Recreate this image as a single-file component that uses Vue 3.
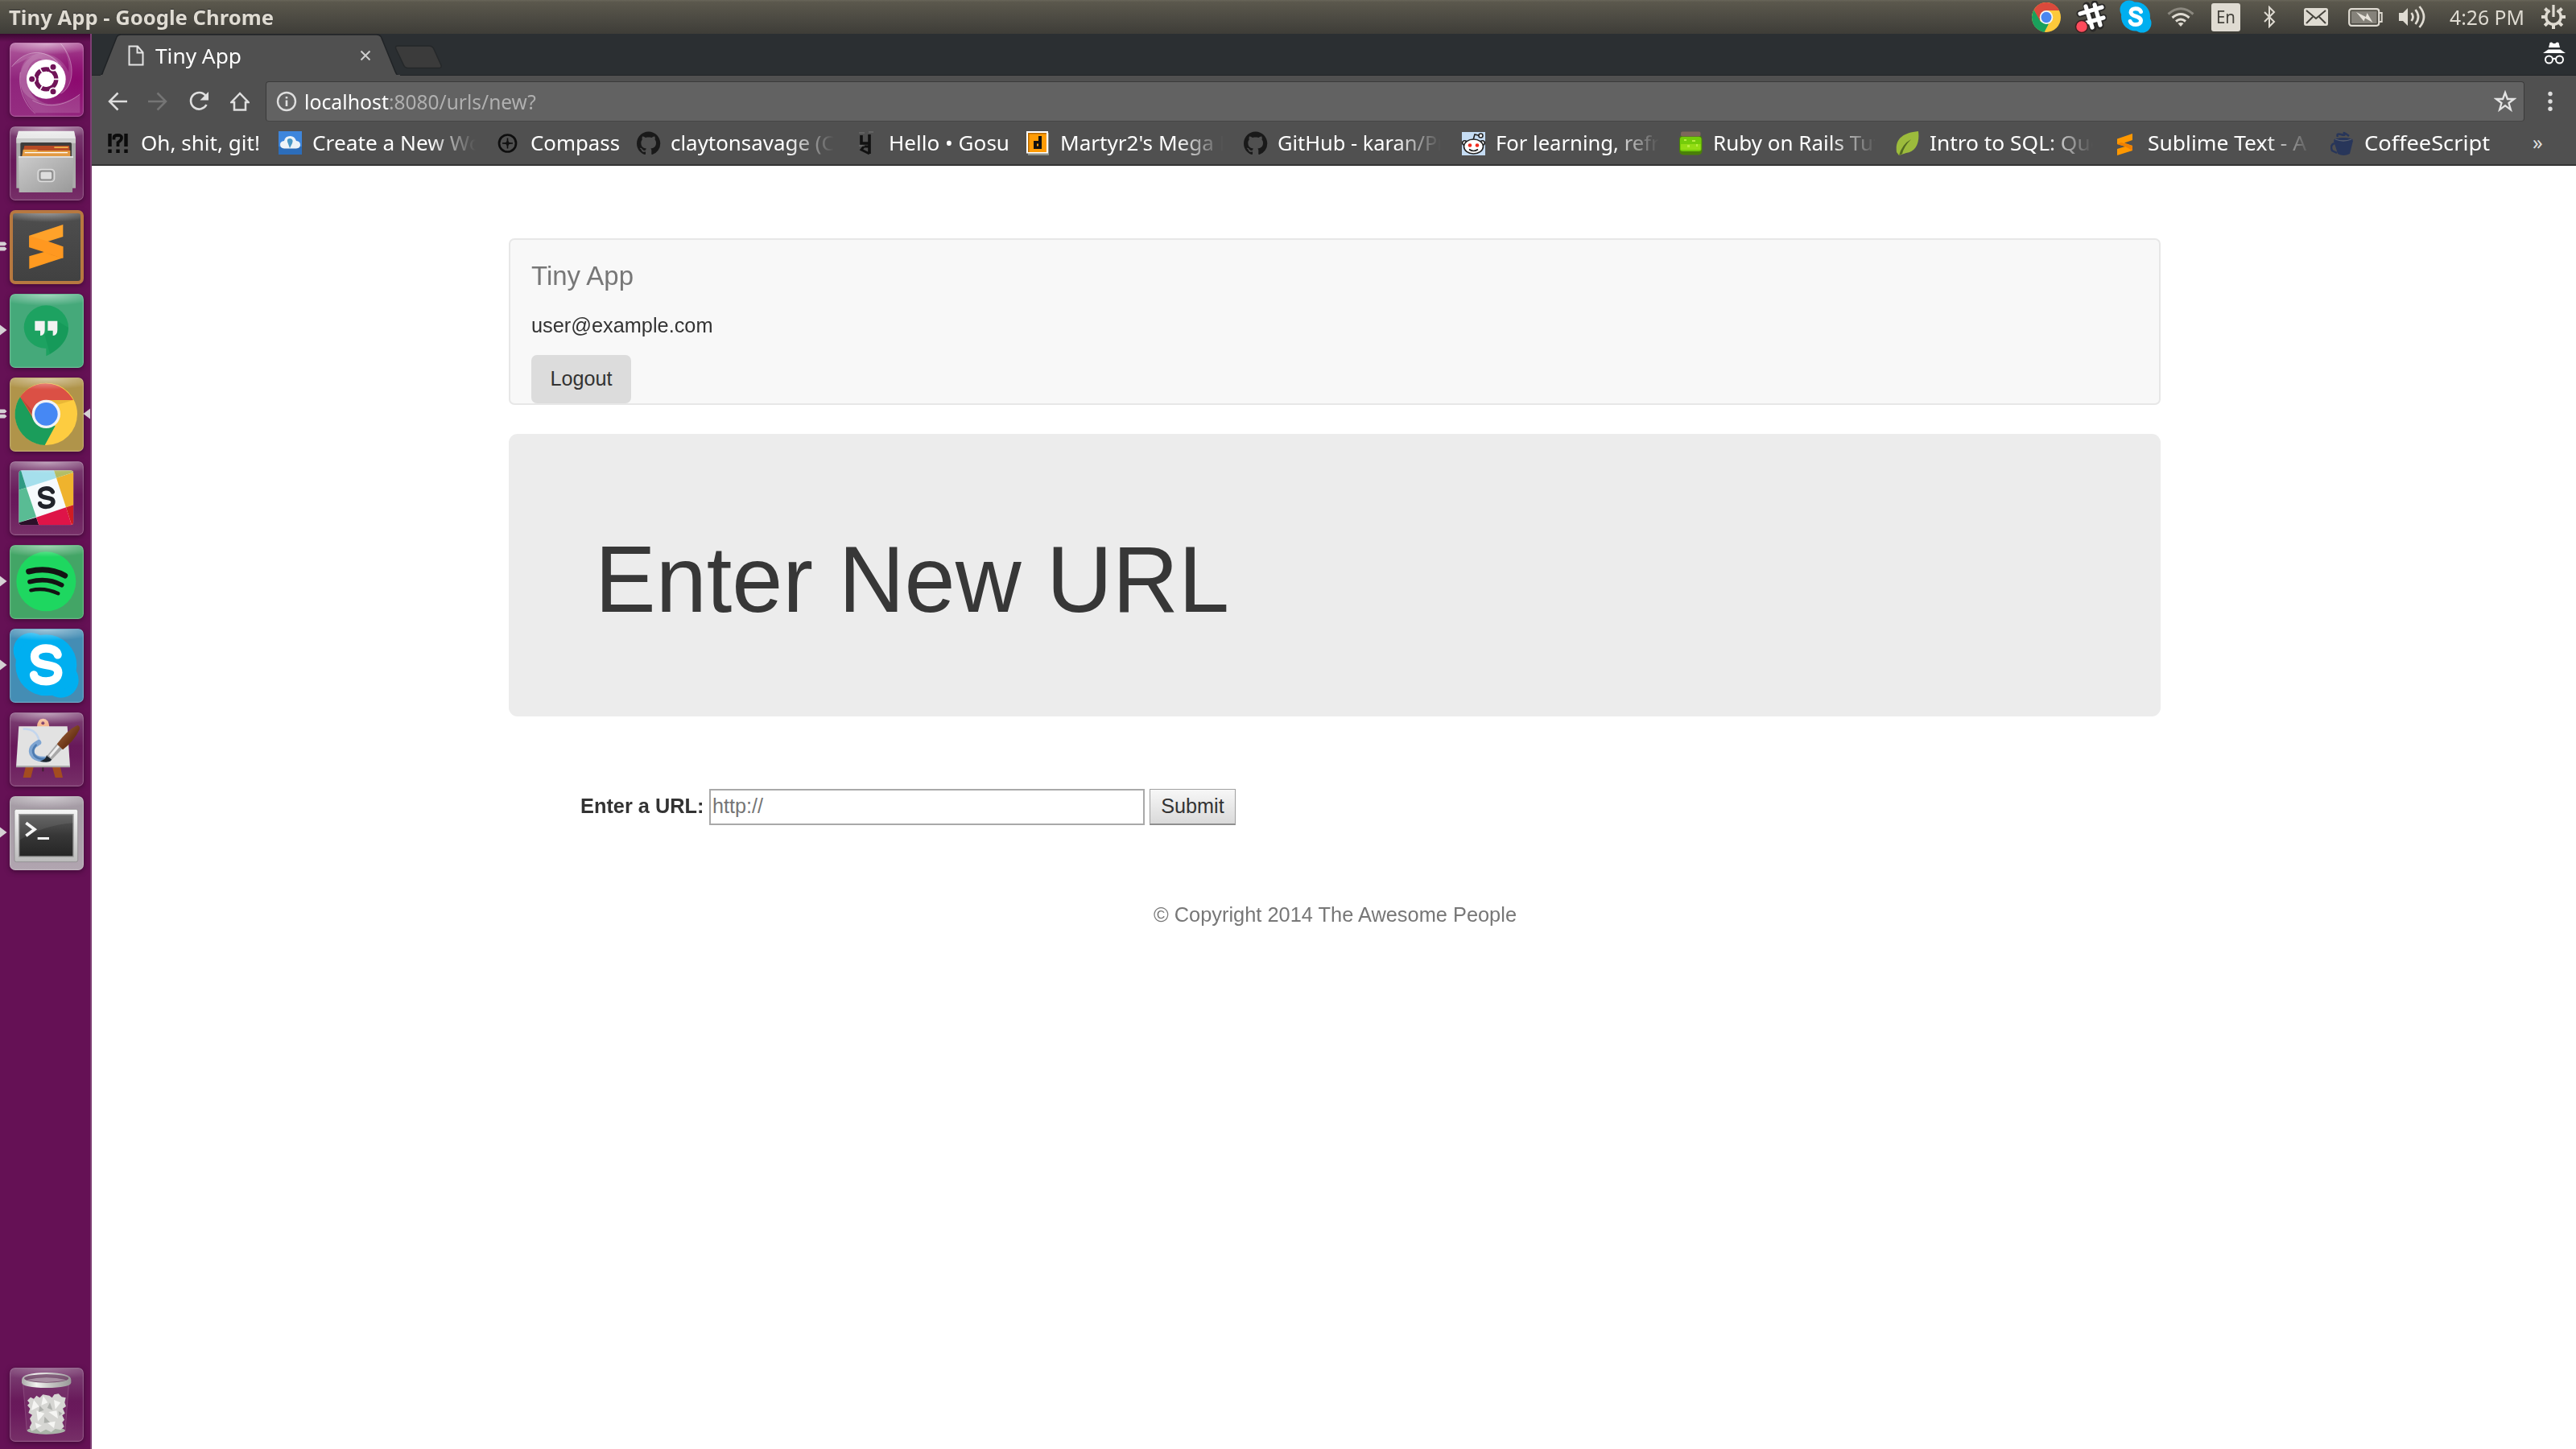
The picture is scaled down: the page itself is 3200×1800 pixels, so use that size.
<script setup>
import { nextTick } from 'vue'

// Condenses a label so that its first n characters (or all of it) span w pixels.
const vFit = {
  mounted(el, { value }) {
    nextTick(() => {
      const node = el.firstChild
      const range = document.createRange()
      range.setStart(node, 0)
      range.setEnd(node, value.n || node.length)
      const k = value.w / range.getBoundingClientRect().width
      const full = el.getBoundingClientRect().width
      el.style.transform = `scaleX(${k})`
      el.style.marginRight = `${full * (k - 1)}px`
    })
  },
}

const bookmarks = [
  { icon: 'bang', text: 'Oh, shit, git!', fit: { w: 148 }, box: 144 },
  { icon: 'cloud', text: 'Create a New Wor', fit: { w: 164, n: 12 }, box: 203, cut: true },
  { icon: 'compass', text: 'Compass', fit: { w: 111 }, box: 106 },
  { icon: 'github', text: 'claytonsavage (Cl', fit: { w: 173, n: 13 }, box: 203, cut: true },
  { icon: 'gosu', text: 'Hello • Gosu', fit: { w: 150 }, box: 145 },
  { icon: 'dic', text: "Martyr2's Mega Pr", fit: { w: 191, n: 14 }, box: 202, cut: true },
  { icon: 'github', text: 'GitHub - karan/Pr', fit: { w: 183, n: 15 }, box: 203, cut: true },
  { icon: 'reddit', text: 'For learning, refre', fit: { w: 153, n: 13 }, box: 202, cut: true },
  { icon: 'jar', text: 'Ruby on Rails Tuto', fit: { w: 163, n: 13 }, box: 201, cut: true },
  { icon: 'leaf', text: 'Intro to SQL: Quer', fit: { w: 156, n: 13 }, box: 203, cut: true },
  { icon: 'sublime', text: 'Sublime Text - A', fit: { w: 158, n: 12 }, box: 201, cut: true },
  { icon: 'coffee', text: 'CoffeeScript', fit: { w: 156 }, box: 153 },
]

const apps = [
  { name: 'dash' },
  { name: 'files' },
  { name: 'sublime', pips: 2 },
  { name: 'hangouts', pips: 1 },
  { name: 'chrome', pips: 2, active: true },
  { name: 'slack' },
  { name: 'spotify', pips: 1 },
  { name: 'skype', pips: 1 },
  { name: 'paint' },
  { name: 'terminal', pips: 1 },
]
</script>

<template>
  <div class="desktop">
    <header class="panel">
      <span v-fit="{ w: 329 }" class="fit title">Tiny App - Google Chrome</span>
      <div class="tray">
        <span class="slot s56">
          <svg width="36" height="37" viewBox="-50 -50 100 100" preserveAspectRatio="none">
            <circle r="50" fill="#fdc93a" />
            <path d="M0-50A50 50 0 0 1 45-23H0L-24 12-43-25A50 50 0 0 1 0-50Z" fill="#db4a3c" />
            <path d="M-43-25-20 14 8 22-7 50A50 50 0 0 1-43-25Z" fill="#1aa05c" />
            <circle r="23" fill="#f5f5f5" /><circle r="18" fill="#4a86f0" />
          </svg>
        </span>
        <span class="slot s55">
          <svg width="40" height="40" viewBox="0 0 40 40">
            <g stroke-linecap="round" fill="none">
              <path d="M15 6l8 28M25 4l7 27M7 16l27-8M9 29l27-8" stroke="#2a2928" stroke-width="9" />
              <path d="M14 7l8 26M25 5l7 25M7 16l27-8M9 29l27-8" stroke="#fff" stroke-width="5.2" />
            </g>
            <circle cx="9" cy="32" r="7.5" fill="#ff4b5c" stroke="#3b2020" stroke-width="1.5" />
          </svg>
        </span>
        <span class="slot s56">
          <svg width="40" height="42" viewBox="0 0 40 42">
            <circle cx="12" cy="12" r="11.5" fill="#00aff0" /><circle cx="28" cy="29" r="11.5" fill="#00aff0" />
            <circle cx="20" cy="20.500" r="18" fill="#00aff0" />
            <path d="M26.500 14.500C25 9.500 14 9 14 15.200c0 6 12.500 4 12.500 10.600C26.500 32 15 32 13.200 26.500" fill="none" stroke="#fff" stroke-width="5" stroke-linecap="round" />
          </svg>
        </span>
        <span class="slot s56">
          <svg width="34" height="24" viewBox="0 0 34 24" fill="none" stroke="#dfdbd2" stroke-width="3">
            <path d="M1.500 8.500Q17-5 32.500 8.500" stroke="#8b887f" />
            <path d="M6.500 13Q17 4 27.500 13M11 17.500q6-5 12 0" /><path d="M13.500 20l3.500 4 3.500-4q-3.500-2-7 0Z" fill="#dfdbd2" stroke="none" />
          </svg>
        </span>
        <span class="slot s57"><span class="lang"><span v-fit="{ w: 24 }" class="fit">En</span></span></span>
        <span class="slot s51">
          <svg width="16" height="28" viewBox="0 0 16 28" fill="none" stroke="#dfdbd2" stroke-width="2"><path d="M2 8l12 12-6 6V2l6 6L2 20" /></svg>
        </span>
        <span class="slot s65">
          <svg width="30" height="22" viewBox="0 0 30 22">
            <rect width="30" height="22" rx="2.500" fill="#dfdbd2" />
            <path d="M3 3l12 10L27 3M3 19l8-8M27 19l-8-8" fill="none" stroke="#45433c" stroke-width="2" />
          </svg>
        </span>
        <span class="slot s58">
          <svg width="43" height="23" viewBox="0 0 43 23">
            <rect x="1.200" y="1.200" width="37" height="20.600" rx="3" fill="none" stroke="#dfdbd2" stroke-width="2.200" />
            <rect x="4" y="4" width="31.500" height="15" fill="#85827a" /><path d="M39 6h2.800v11H39" fill="none" stroke="#dfdbd2" stroke-width="1.800" />
            <path d="M10 5l12 6 1.500-5 7 12-9.500-5.500-1.500 4Z" fill="#e6e2da" />
          </svg>
        </span>
        <span class="slot s59">
          <svg width="36" height="32" viewBox="0 0 36 32">
            <path d="M1 11h5l6-6v22l-6-6H1Z" fill="#dfdbd2" />
            <path d="M16.500 11q4 5 0 10M21.500 7q7 9 0 18M26.500 3q11 13 0 26" fill="none" stroke="#dfdbd2" stroke-width="2.700" />
          </svg>
        </span>
        <span v-fit="{ w: 93 }" class="fit clock">4:26 PM</span>
        <svg width="30" height="30" viewBox="-15 -15 30 30" fill="none" stroke="#dfdbd2">
          <path d="M-4.500-8A9.200 9.200 0 1 0 4.500-8" stroke-width="3.400" />
          <path d="M0-15V0" stroke-width="3.200" />
          <path d="M0 10v5M10 0h5M-10 0h-5M7 7l3.800 3.800M-7 7l-3.800 3.800M7.500-7.500l3-3M-7.500-7.500l-3-3" stroke-width="4" />
        </svg>
      </div>
    </header>

    <div class="body">
      <aside class="launcher">
        <svg width="0" height="0" class="defs">
          <defs>
            <radialGradient id="shine" cx=".5" cy="0" r=".75" gradientTransform="matrix(1 0 0 .55 0 0)"><stop offset="0" stop-color="#fff" stop-opacity=".5" /><stop offset="1" stop-color="#fff" stop-opacity="0" /></radialGradient>
            <linearGradient id="steel" x1="0" y1="0" x2="1" y2="1"><stop offset="0" stop-color="#ccc" /><stop offset="1" stop-color="#999" /></linearGradient>
            <linearGradient id="white" x1="0" y1="0" x2="0" y2="1"><stop offset="0" stop-color="#f5f5f5" /><stop offset="1" stop-color="#bbb" /></linearGradient>
            <linearGradient id="screen" x1="0" y1="0" x2="0" y2="1"><stop offset="0" stop-color="#5a5a5a" /><stop offset=".5" stop-color="#373737" /><stop offset="1" stop-color="#252525" /></linearGradient>
            <linearGradient id="wood" x1="0" y1="0" x2="1" y2="1"><stop offset="0" stop-color="#a86c40" /><stop offset=".6" stop-color="#6d3517" /><stop offset="1" stop-color="#5a2a12" /></linearGradient>
            <linearGradient id="rim" x1="0" y1="0" x2="1" y2="0"><stop offset="0" stop-color="#aaa" /><stop offset=".3" stop-color="#f2f2f0" /><stop offset=".6" stop-color="#c4c4c2" /><stop offset="1" stop-color="#999" /></linearGradient>
          </defs>
        </svg>
        <div v-for="app in apps" :key="app.name" class="app">
          <svg v-if="app.pips" class="pip" width="9" height="14" viewBox="0 0 9 14" fill="#d5d0d4">
            <path v-if="app.pips === 1" d="M0 0.500L8.500 7 0 13.500Z" />
            <path v-else d="M0 1.500h6L8.500 4 6 6.300H0ZM0 7.700h6L8.500 10 6 12.500H0Z" />
          </svg>
          <svg v-if="app.active" class="focus" width="9" height="14" viewBox="0 0 9 14"><path d="M9 0.500L.5 7 9 13.500Z" fill="#d5d0d4" /></svg>
          <div class="tile" :class="app.name">
            <svg viewBox="0 0 276 276" width="92" height="92">
              <g v-if="app.name === 'dash'">
                <g fill="#fff" fill-opacity=".14" stroke="#fff" stroke-opacity=".4" stroke-width="2.500">
                  <path d="M8 88C60 20 150 20 200 90L135 66Q70 70 66 136 66 190 110 220 40 200 38 140 38 80 85 50Z" stroke="none" />
                  <path d="M8 90C55 25 130 20 180 75M190 3C250 70 240 165 190 190M40 110C30 170 55 230 95 264M85 215C150 250 215 230 262 192M8 90" fill="none" />
                  <path d="M190 3C250 70 240 165 190 190Q230 130 170 75L110 60Q60 70 66 140 70 200 130 225 190 240 262 192L262 262H95Q30 190 40 110 50 50 110 40 190 40 220 110 225 50 190 3Z" stroke="none" />
                </g>
                <circle cx="136" cy="136" r="73" fill="#fff" />
                <circle cx="136" cy="136" r="37" fill="none" stroke="#701458" stroke-width="17" />
                <path d="M136 136h50M136 136l-26-45M136 136l-26 45" stroke="#fff" stroke-width="5" />
                <circle cx="136" cy="136" r="29" fill="#fff" />
                <g fill="#701458" stroke="#fff" stroke-width="5"><circle cx="83" cy="136" r="13" /><circle cx="162" cy="91" r="13" /><circle cx="162" cy="182" r="13" /></g>
              </g>
              <g v-if="app.name === 'files'">
                <path d="M33 18H240L246 46V230H25V46Z" fill="#aaa" /><path d="M33 17H240L246 46H25Z" fill="#e8e8e8" /><path d="M25 46H246V62H25Z" fill="#cdcdcd" />
                <rect x="40" y="60" width="191" height="60" rx="5" fill="#3f3c3b" />
                <path d="M55 72H222L226 112H46Z" fill="#b64a25" /><path d="M50 86H104V90H226V112H46Z" fill="#e39a43" /><path d="M166 76H218V81H166ZM52 90H100V94H52Z" fill="#eeb34c" /><path d="M56 96H216V100H56Z" fill="#fff" />
                <path d="M33 111H237L234 246H35Z" fill="url(#steel)" /><path d="M33 111H237V117H33Z" fill="#ddd" />
                <rect x="105" y="160" width="62" height="46" rx="12" fill="#bbb" stroke="#ddd" stroke-width="4" /><rect x="113" y="167" width="46" height="32" rx="7" fill="#ddd" stroke="#8a8a8a" stroke-width="5" />
              </g>
              <g v-if="app.name === 'sublime'">
                <path d="M73 172L199 136V178L73 219Z" fill="#ff9a20" /><path d="M125 155L199 179L160 168Z" fill="#e5831a" /><path d="M73 95L199 54V99L73 139Z" fill="#ffa22a" /><path d="M145 117L73 95V139L125 155 199 179V136Z" fill="#ff9820" />
              </g>
              <g v-if="app.name === 'hangouts'">
                <path d="M136 43A83 83 0 0 1 219 126C219 175 180 210 136 232V203A80 80 0 0 1 53 126 83 83 0 0 1 136 43Z" fill="#1da261" />
                <path d="M131 154L178 101 219 126Q215 190 150 224Z" fill="#0d8e51" opacity=".4" />
                <path d="M94 101h37v33q0 20-17 22v-19H94ZM142 101h36v33q0 20-17 22v-19h-19Z" fill="#f2f2f2" />
              </g>
              <g v-if="app.name === 'chrome'">
                <circle cx="136" cy="136" r="116" fill="#fdcc40" />
                <path d="M237 84H136L86 145 39 72A116 116 0 0 1 237 84Z" fill="#db5045" /><path d="M39 72L92 160 170 180 131 252A116 116 0 0 1 39 72Z" fill="#1b9d5b" />
                <path d="M136 84H237L184 100Z" fill="#dba52e" opacity=".55" /><path d="M39 72L86 155V125Z" fill="#962f28" opacity=".4" />
                <circle cx="136" cy="136" r="53" fill="#f3f3f5" /><circle cx="136" cy="136" r="43" fill="#4688f4" />
              </g>
              <g v-if="app.name === 'slack'">
                <clipPath id="sq"><rect x="34" y="34" width="204" height="204" rx="12" /></clipPath>
                <g clip-path="url(#sq)">
                  <path d="M34 34H238V238H34Z" fill="#f6fafc" /><path d="M34 34H165L174 62 62 98 42 34Z" fill="#a5dfec" /><path d="M34 34H42L62 98 34 107Z" fill="#2f9a83" />
                  <path d="M34 107L62 98 99 207 34 229Z" fill="#59bc94" /><path d="M34 229L99 209 109 238H34Z" fill="#2b1029" /><path d="M99 209L210 172 231 238H109Z" fill="#de1448" />
                  <path d="M174 62L238 41V163L210 172Z" fill="#efb32d" /><path d="M165 34H238V41L174 62Z" fill="#b3bd67" /><path d="M210 172L238 163V238H231Z" fill="#cf1c22" />
                </g>
                <path d="M160 114C150 94 112 99 113 119 115 144 162 128 162 151 161 175 115 174 113 157" fill="none" stroke="#20232a" stroke-width="16" stroke-linecap="round" />
              </g>
              <g v-if="app.name === 'spotify'">
                <circle cx="136" cy="136" r="111" fill="#1ed760" /><g fill="none" stroke="#131313" stroke-linecap="round"><path d="M71 99Q145 80 206 114" stroke-width="21" /><path d="M75 137Q140 120 194 149" stroke-width="17" /><path d="M79 169Q130 157 181 181" stroke-width="13" /></g>
              </g>
              <g v-if="app.name === 'skype'">
                <g fill="#00aff0"><circle cx="80" cy="81" r="66" /><circle cx="191" cy="191" r="66" /><circle cx="136" cy="136" r="114" /></g>
                <path d="M179 97C172 64 92 65 93 104 94 151 180 120 181 164 180 208 94 203 90 172" fill="none" stroke="#fff" stroke-width="31" stroke-linecap="round" />
              </g>
              <g v-if="app.name === 'paint'">
                <path d="M60 200H90L79 243H50ZM158 200H188L198 243H170Z" fill="#a34c20" /><path d="M121 200h6v20h-6Z" fill="#402030" />
                <path d="M102 55Q103 22 125 23 146 24 148 55Z" fill="#f6b78f" /><circle cx="124" cy="40" r="6" fill="#7e3d69" />
                <path d="M34 52H215L225 203H24Z" fill="#e2e2e2" /><path d="M24 199H225V205H24Z" fill="#a5a5a5" />
                <path d="M50 62Q92 58 107 95 114 112 100 128" fill="none" stroke="#c3d6ee" stroke-width="8" /><path d="M108 112Q74 130 84 155 95 178 140 174" fill="none" stroke="#7ea5d2" stroke-width="20" stroke-linecap="round" /><path d="M98 122Q80 140 92 160 105 176 140 174" fill="none" stroke="#4d7bb0" stroke-width="8" stroke-linecap="round" />
                <path d="M112 182Q134 178 138 160L158 168Q160 192 112 182Z" fill="#1c252d" /><path d="M139 162L175 118 196 136 157 176Z" fill="#a8a8a8" /><path d="M147 160L179 122 186 128 152 168Z" fill="#eee" />
                <path d="M176 118Q215 65 252 48 264 50 260 64 240 107 198 139Z" fill="url(#wood)" />
              </g>
              <g v-if="app.name === 'terminal'">
                <rect x="18" y="49" width="236" height="196" rx="7" fill="url(#white)" stroke="#858385" stroke-width="2" /><rect x="35" y="68" width="202" height="157" fill="url(#screen)" stroke="#989898" stroke-width="4" />
                <path d="M35 68H237V100Q120 110 35 165Z" fill="#fff" opacity=".08" /><path d="M61 100L93 124 61 148" fill="none" stroke="#f5f5f5" stroke-width="11" /><rect x="104" y="153" width="43" height="9" fill="#f5f5f5" />
              </g>
              <path d="M8 3H268Q273 3 273 10V85Q136 125 3 85V10Q3 3 8 3Z" fill="url(#shine)" />
              <rect x="2" y="2" width="272" height="272" rx="16" fill="none" stroke="#fff" stroke-opacity=".22" stroke-width="3.500" />
            </svg>
          </div>
        </div>
        <div class="app bin">
          <div class="tile">
            <svg viewBox="0 0 276 276" width="92" height="92">
              <path d="M49 50H221L207 235Q136 260 64 235Z" fill="#7d3a70" opacity=".5" stroke="#b98aae" stroke-width="2" /><ellipse cx="136" cy="234" rx="71" ry="14" fill="#aab3a8" />
              <path d="M66 122L78 110 90 116 100 104 112 112 124 100 140 103 148 104 158 112 166 100 182 97 194 109 209 112 205 130 210 144 198 152 206 170 196 178 204 194 196 204 203 220 190 232 170 228 155 240 135 230 115 241 100 228 82 236 74 222 82 206 75 190 84 176 70 168 76 152 66 140 74 132Z" fill="#d6d6d3" />
              <path d="M90 120L110 145 80 160ZM125 105L142 130 118 140ZM165 120L190 130 170 155ZM100 160L130 170 105 200ZM145 165L175 160 180 190ZM95 205L120 215 100 226ZM140 205L170 200 165 225Z" fill="#f5f5f3" /><path d="M112 142L128 158 108 165ZM150 130L160 158 140 150ZM130 182L150 204 128 206ZM182 162L196 170 185 180Z" fill="#aeb0ac" />
              <path d="M45 45Q45 19 137 18 229 19 229 45V56Q225 74 137 75 50 74 45 56Z" fill="url(#rim)" /><ellipse cx="137" cy="40" rx="83" ry="16" fill="#77506f" /><path d="M62 46Q137 28 212 46 137 62 62 46Z" fill="#a78fa2" />
              <path d="M8 3H268Q273 3 273 10V85Q136 125 3 85V10Q3 3 8 3Z" fill="url(#shine)" opacity=".5" />
              <rect x="2" y="2" width="272" height="272" rx="16" fill="none" stroke="#fff" stroke-opacity=".2" stroke-width="3.500" />
            </svg>
          </div>
        </div>
      </aside>

      <section class="browser">
        <div class="tabstrip">
          <div class="tab">
            <svg class="tabshape" width="372" height="52" viewBox="0 0 372 52"><path d="M0 52Q2 51 3 47L20 4Q21.500 1 25 1H343Q347 1 348.500 4L366 47Q367.500 51 370 52Z" fill="#505050" stroke="#202326" stroke-width="1.500" /><path d="M0 51H372V52H0Z" fill="#505050" /></svg>
            <div class="tabcontent">
              <svg width="20" height="26" viewBox="0 0 20 26" fill="none" stroke="#e4e4e4" stroke-width="2"><path d="M1.500 1.500H12L18.500 9V24.500H1.500ZM11.500 1.500V9.500H18" /></svg>
              <span v-fit="{ w: 107 }" class="fit tabtitle">Tiny App</span>
              <svg class="close" width="14" height="14" viewBox="0 0 14 14"><path d="M1.500 1.500l11 11M12.500 1.500l-11 11" stroke="#cfcfcf" stroke-width="2" /></svg>
            </div>
          </div>
          <svg class="newtab" width="62" height="32" viewBox="0 0 62 32"><path d="M5 2H44Q48 2 49.500 5L59 26Q60 29.500 56 29.500H18Q14 29.500 12.500 26L3 6Q1.500 2 5 2Z" fill="#3b3b3b" stroke="#25282a" stroke-width="1.500" /></svg>
          <svg class="incognito" width="28" height="28" viewBox="0 0 28 28">
            <path d="M8.500 1Q11 0 12 1.500 14 2.500 16 1.500 17 0 19.500 1L21 7H7ZM6.500 9.500H21.500L28 14H0Z" fill="#fff" /><g fill="none" stroke="#fff" stroke-width="2"><circle cx="7.500" cy="22" r="4.500" /><circle cx="20.500" cy="22" r="4.500" /><path d="M12 21.500q2-1.500 4 0" /></g>
          </svg>
        </div>

        <div class="toolbar">
          <div class="navbuttons">
            <svg width="24" height="24" viewBox="0 0 24 24" fill="none" stroke="#dedede" stroke-width="2.500"><path d="M24 12H2M12.500 1.500L2 12l10.500 10.500" /></svg>
            <svg width="24" height="24" viewBox="0 0 24 24" fill="none" stroke="#757575" stroke-width="2.500"><path d="M0 12h22M11.500 1.500L22 12 11.500 22.500" /></svg>
            <svg width="26" height="26" viewBox="0 0 26 26"><path d="M21.500 6A10.300 10.300 0 1 0 22.500 17" fill="none" stroke="#dedede" stroke-width="2.600" /><path d="M25 1V11.500H14.500Z" fill="#dedede" /></svg>
            <svg width="24" height="24" viewBox="0 0 24 24"><path d="M12 2L1.500 13H5V22.500H19V13H22.500Z" fill="none" stroke="#dedede" stroke-width="2.500" /></svg>
          </div>
          <div class="omnibox">
            <svg width="26" height="26" viewBox="0 0 26 26"><circle cx="13" cy="13" r="11" fill="none" stroke="#dedede" stroke-width="2.400" /><path d="M11.700 11.500h2.600V19h-2.600ZM11.700 7h2.600v2.600h-2.600Z" fill="#dedede" /></svg>
            <span class="url"><span v-fit="{ w: 105 }" class="fit host">localhost</span><span v-fit="{ w: 183 }" class="fit path">:8080/urls/new?</span></span>
            <svg class="star" width="28" height="28" viewBox="0 0 28 28"><path d="M14 3l2.900 8H25l-6.500 5 2.400 8.300L14 19.200 7.100 24.300 9.500 16 3 11h8.100Z" fill="none" stroke="#e4e4e4" stroke-width="2.300" /></svg>
          </div>
          <svg class="menu" width="6" height="26" viewBox="0 0 6 26" fill="#dedede"><circle cx="3" cy="3.500" r="2.700" /><circle cx="3" cy="13" r="2.700" /><circle cx="3" cy="22.300" r="2.700" /></svg>
        </div>

        <div class="bookmarks">
          <div v-for="(b, i) in bookmarks" :key="i" class="bookmark">
            <svg class="favicon" width="30" height="30" viewBox="0 0 30 30">
              <g v-if="b.icon === 'bang'" fill="none" stroke="#0c0c0c" stroke-width="4.400"><path d="M2.500 3V19M22.500 3V19M2.500 22.500V27M12.500 22.500V27M22.500 22.500V27" /><path d="M7.500 10.500V8Q7.500 5 12.500 5T17 8.500Q17 11 12.500 14V19" stroke-width="3.800" /></g>
              <g v-else-if="b.icon === 'cloud'"><rect width="29" height="29" fill="#3e86dc" /><path d="M0 19H29V29H0Z" fill="#2c6dba" /><path d="M7 21.500Q2 21 2 16.500 2 12.500 7 12 8 6 14.500 6 20 6 22 12 27 12.500 27 17 27 21 22 21.500Z" fill="#eef3f7" /><path d="M14.500 9Q19 10 17 15L14 21 11 13Q10 9 14.500 9Z" fill="#4a97c5" /></g>
              <g v-else-if="b.icon === 'compass'" fill="none" stroke="#0e0e0e" stroke-width="2.700"><circle cx="13.500" cy="15" r="10.500" /><path d="M13.500 8.500V21.500M7 15H20" stroke-width="1.600" /><path d="M13.500 10l1.500 3.500 3.500 1.500-3.500 1.500-1.500 3.500-1.500-3.500L8.500 15l3.500-1.500Z" fill="#111" stroke="none" /></g>
              <path v-else-if="b.icon === 'github'" transform="translate(0 .5) scale(1.83)" d="M8 0C3.580 0 0 3.580 0 8c0 3.540 2.290 6.530 5.470 7.590.4.070.55-.17.55-.38 0-.19-.01-.82-.01-1.490-2.010.37-2.530-.49-2.690-.94-.09-.23-.48-.94-.82-1.130-.28-.15-.68-.52-.01-.53.63-.01 1.080.58 1.230.82.720 1.210 1.870.87 2.330.66.070-.52.280-.87.510-1.070-1.780-.2-3.640-.89-3.640-3.950 0-.87.310-1.590.820-2.150-.08-.2-.36-1.020.08-2.120 0 0 .67-.21 2.200.82.640-.18 1.320-.27 2-.27s1.360.09 2 .27c1.530-1.040 2.200-.82 2.200-.82.440 1.100.160 1.920.080 2.120.510.560.820 1.270.820 2.150 0 3.070-1.870 3.750-3.650 3.950.290.250.540.730.540 1.480 0 1.070-.01 1.930-.01 2.200 0 .21.150.46.550.38A8.010 8.010 0 0 0 16 8c0-4.420-3.580-8-8-8Z" fill="#191919" />
              <g v-else-if="b.icon === 'gosu'" fill="none" stroke="#111" stroke-width="3.600"><path d="M8 5V15H18M18 4V28" /><path d="M18 28L8 23 11 19H18" stroke-width="3" /><path d="M5 2H12M17 1H23M5 18H12" stroke="#777" stroke-width="1.200" /></g>
              <g v-else-if="b.icon === 'dic'"><rect x="2" y="2" width="26" height="28" fill="#8a8f88" /><rect width="27" height="27.500" fill="#fff" /><rect x="2" y="2" width="23" height="24" fill="#b86c00" /><rect x="3.500" y="3.500" width="21.500" height="22.500" fill="#ff9c05" /><path d="M15 6H19V22H9V12H15ZM13 15.500V18.500H15V15.500Z" fill="#111" fill-rule="evenodd" /></g>
              <g v-else-if="b.icon === 'reddit'"><rect y="1" width="29" height="29" fill="#c5dcf3" /><g fill="#fff" stroke="#222" stroke-width="1.600"><path d="M14 11L16 4L22 5.500" fill="none" /><circle cx="23.500" cy="5.500" r="2.500" /><circle cx="3.500" cy="14.500" r="2.800" /><circle cx="25.500" cy="14.500" r="2.800" /><ellipse cx="14.500" cy="19" rx="12" ry="9" /><path d="M9 22.500q5.500 4 11 0" fill="none" /></g><circle cx="10" cy="17.500" r="2.300" fill="#f12b1d" /><circle cx="19" cy="17.500" r="2.300" fill="#f12b1d" /></g>
              <g v-else-if="b.icon === 'jar'"><rect y="5" width="28.500" height="24.500" rx="5" fill="#4a8008" /><rect x="1" y="7" width="26.500" height="18" rx="3" fill="#74cc0a" /><path d="M2 16H26.500V23H2Z" fill="#94dd14" /><rect x="2" y="0.500" width="24.500" height="6" rx="2" fill="#7d675b" /><path d="M6 10h3v2H6ZM16 11h4v2H16ZM10 17h3v3h-3ZM21 16h2v3h-2Z" fill="#b8ee40" /></g>
              <g v-else-if="b.icon === 'leaf'"><path d="M28 0C30 14 25 26 13 27L4 30 1 26C-1 10 8 2 28 0Z" fill="#9cbb3c" /><path d="M4 30Q8 16 19 10Q10 19 8 28Z" fill="#526a22" /></g>
              <g v-else-if="b.icon === 'sublime'"><path d="M4 9.500L23 3V11L13 14.500L23 18V24L4 30V22L14 19 4 16Z" fill="#ff9800" /><path d="M14 19L4 16 9 14 23 18V24Z" fill="#f08000" /></g>
              <g v-else><path d="M4 12H28L24 28Q16 32 9 28Z" fill="#28365a" /><ellipse cx="16" cy="11" rx="12" ry="3" fill="#28365a" /><path d="M5 15Q-1 17 2 24L8 27" fill="none" stroke="#28365a" stroke-width="2.500" /><path d="M6 10Q16 14 26 10" fill="none" stroke="#59606e" stroke-width="1.300" /><path d="M9 7Q7 2 13 4T17 3T23 6" fill="none" stroke="#28365a" stroke-width="2.500" /></g>
            </svg>
            <div class="label" :class="{ cut: b.cut }" :style="{ width: b.box + 'px' }"><span v-fit="b.fit" class="fit">{{ b.text }}</span></div>
          </div>
          <span class="more">»</span>
        </div>

        <main class="page">
          <nav class="navbar">
            <a class="brand"><span v-fit="{ w: 127 }" class="fit">Tiny App</span></a>
            <div class="email"><span v-fit="{ w: 225.500 }" class="fit">user@example.com</span></div>
            <button class="logout">Logout</button>
          </nav>
          <div class="jumbotron"><h1><span v-fit="{ w: 788 }" class="fit">Enter New URL</span></h1></div>
          <form class="entry" @submit.prevent>
            <label for="long"><span v-fit="{ w: 153.500 }" class="fit">Enter a URL:</span></label>
            <input id="long" type="text" placeholder="http://" />
            <button class="submit">Submit</button>
          </form>
          <footer><span v-fit="{ w: 451 }" class="fit">© Copyright 2014 The Awesome People</span></footer>
        </main>
      </section>
    </div>
  </div>
</template>

<style>
body { overflow: hidden; background: #fff; }
</style>

<style scoped>
.desktop { width: 3200px; height: 1800px; display: flex; flex-direction: column; overflow: hidden; background: #fff; font-family: "Noto Sans", sans-serif; font-size: 25px; box-sizing: border-box; }
.desktop *, .desktop *::before { box-sizing: border-box; }
svg { display: block; flex: none; }
.fit { display: inline-block; white-space: pre; transform-origin: 0 50%; }

.panel { height: 42px; flex: none; display: flex; align-items: center; justify-content: space-between; padding: 0 13px 0 11px; background: linear-gradient(#69665a, #5b584d 6%, #3e3d38); color: #dfdbd2; line-height: 42px; }
.title { font-weight: 700; font-size: 25px; text-shadow: 0 -1px 1px #333; }
.tray { display: flex; align-items: center; height: 42px; }
.slot { display: flex; justify-content: center; align-items: center; flex: none; }
.s51 { width: 51px; } .s55 { width: 55px; } .s56 { width: 56px; } .s57 { width: 57px; } .s58 { width: 58px; } .s59 { width: 59px; } .s65 { width: 65px; }
.lang { width: 36px; height: 35px; border-radius: 3px; background: #dfdbd2; color: #45433d; font-size: 21px; line-height: 35px; padding-left: 6px; }
.clock { margin-left: 16px; line-height: 40px; }
.clock + svg { margin-left: 21px; }

.body { flex: 1; display: flex; min-height: 0; }
.launcher { width: 114px; flex: none; display: flex; flex-direction: column; gap: 12px; padding: 11px 0 9px; background: linear-gradient(#3b0731, #651155 10px, #651155); border-right: 2px solid #7d3f73; }
.defs { position: absolute; }
.app { position: relative; height: 92px; flex: none; padding-left: 11.500px; }
.bin { margin-top: auto; }
.pip { position: absolute; left: 0; top: 38px; }
.focus { position: absolute; right: 0; top: 38px; }
.tile { width: 92px; height: 92px; border-radius: 7px; overflow: hidden; background: linear-gradient(#7e4576, #68195a 45%, #6a1a5c 60%, #773068); box-shadow: 0 2px 6px rgba(30, 0, 25, .5); }
.dash { background: radial-gradient(circle at 90% 50%, #8d096f, transparent 60%), linear-gradient(#b05b9d, #90247c 50%, #952d81); }
.sublime { background: linear-gradient(#4e4e4e, #414141); border: 4px solid #b77840; }
.sublime svg { margin: -4px; }
.hangouts { background: #45a97a; }
.chrome { background: #b0944a; }
.spotify { background: #43a566; }
.skype { background: #448db4; }
.terminal { background: linear-gradient(#a39aa3, #b1a5b0); }

.browser { flex: 1; min-width: 0; display: flex; flex-direction: column; }
.tabstrip { height: 52px; flex: none; display: flex; background: #2b2f32; border-bottom: 1px solid #222527; padding-right: 13px; }
.tab { position: relative; width: 372px; height: 52px; margin-left: 11px; }
.tabshape { position: absolute; left: 0; top: 0; }
.tabcontent { position: relative; display: flex; align-items: center; height: 52px; padding: 1px 36px 0 34px; }
.tabtitle { margin-left: 14px; color: #fff; line-height: 50px; }
.close { margin-left: auto; }
.newtab { margin: 13px 0 0 -8px; }
.incognito { margin: 10px 0 0 auto; }
.toolbar { height: 57px; flex: none; display: flex; align-items: center; background: #505050; padding: 7px 28px 0 20px; }
.navbuttons { display: flex; align-items: center; gap: 26px; width: 196px; }
.omnibox { width: 2806px; height: 50px; display: flex; align-items: center; border: 1px solid #3a3a3a; border-bottom-color: #454545; border-radius: 4px; background: #626262; padding: 0 9px 0 12px; }
.url { margin-left: 9px; padding-bottom: 1px; line-height: 46px; color: #b0b0b0; white-space: nowrap; display: flex; }
.host { color: #fff; }
.star { margin-left: auto; }
.menu { margin-left: 29px; }
.bookmarks { height: 55px; flex: none; display: flex; align-items: center; background: #505050; border-bottom: 2px solid #343434; padding-left: 20px; color: #fff; }
.bookmark { display: flex; align-items: center; padding-right: 24px; flex: none; }
.favicon { margin-right: 12px; }
.label { line-height: 53px; height: 53px; white-space: nowrap; margin-right: 2px; flex: none; }
.bookmark:first-child .label { margin-left: -1px; margin-right: 3px; }
.cut { overflow: hidden; -webkit-mask-image: linear-gradient(to right, #000 145px, transparent 203px); mask-image: linear-gradient(to right, #000 145px, transparent 203px); }
.more { margin-left: 30px; color: #ddd; line-height: 47px; padding-bottom: 3px; }

.page { flex: 1; padding: 90px 516px 0 518px; font-family: "Liberation Sans", Arial, sans-serif; font-size: 25.200px; color: #333; display: flex; flex-direction: column; }
.navbar { height: 207px; border: 2px solid #e7e7e7; border-radius: 7px; background: #f8f8f8; padding-left: 26px; flex: none; }
.brand { display: block; font-size: 32.400px; line-height: 90px; height: 90px; color: #777; }
.email { line-height: 33px; height: 33px; }
.logout { display: block; margin-top: 20px; width: 124px; height: 60px; border: 0; border-radius: 7px; background: #dcdcdc; color: #333; font: inherit; line-height: 58px; padding: 0 0 2px; text-align: center; }
.jumbotron { margin-top: 36px; height: 351px; border-radius: 11px; background: #ececec; padding: 118px 0 0 107px; flex: none; }
h1 { margin: 0; font-weight: 400; font-size: 116px; line-height: 126px; color: #373737; }
.entry { margin-top: 90px; height: 45px; display: flex; align-items: center; padding-left: 89px; flex: none; }
label { font-weight: 700; width: 160px; white-space: nowrap; line-height: 43px; padding-bottom: 2px; }
input { width: 541px; height: 45px; border: 2px solid #a9a9a9; padding: 0 2px 2px; font: inherit; border-radius: 0; background: #fff; }
input::placeholder { color: #757575; opacity: 1; }
.submit { margin-left: 6px; width: 107px; height: 45px; border: 1px solid #a0a0a0; border-bottom: 2px solid #8f8f8f; border-radius: 0; background: linear-gradient(#f7f7f7, #dadada); color: #333; font: inherit; padding: 0 0 1px; text-align: center; }
footer { margin-top: 95px; text-align: center; color: #777; line-height: 32px; }
</style>
